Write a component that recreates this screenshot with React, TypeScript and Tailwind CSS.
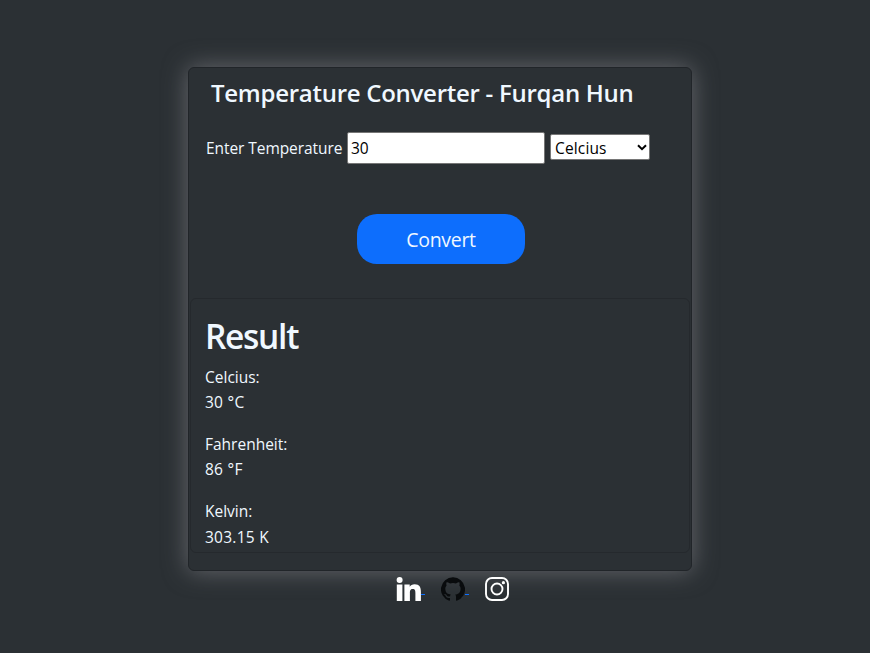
import React from "react";

const font = "font-['Open_Sans','Noto_Sans',sans-serif]";

function Reading({ label, value, spacing }: { label: string; value: string; spacing: string }) {
  return (
    <div className={`text-[15.5px] ${spacing}`}>
      <p className="tracking-[0px]">{label}</p>
      <p className="tracking-[0.25px]">{value}</p>
    </div>
  );
}

export default function App() {
  return (
    <main className={`flex h-[653px] w-[870px] flex-col overflow-hidden bg-[#2b3034] pt-[67px] pl-[188px] text-[aliceblue] ${font}`}>
      <section className="flex h-[504px] w-[504px] shrink-0 flex-col rounded-[6px] border border-[#212529] bg-[#2b3034] px-px shadow-[0_0_24px_rgba(128,128,134,0.7)]">
        <h1 className="h-[51px] pl-[21px] text-[24px] leading-[50px] font-semibold tracking-[-0.27px] whitespace-nowrap">
          Temperature Converter - Furqan Hun
        </h1>
        <div className="flex h-[58px] items-center pl-4">
          <label htmlFor="temperature" className="w-[141px] pt-px text-[15.5px] tracking-[-0.07px] whitespace-nowrap">Enter Temperature</label>
          <input id="temperature" defaultValue="30" className="h-[32px] w-[198px] rounded-[2px] border border-[#767676] bg-white px-[3px] text-[15.5px] text-black outline-none" />
          <div className="relative mb-[2px] ml-[5px] h-[26px] w-[100px]">
            <select defaultValue="Celcius" className="h-full w-full appearance-none rounded-[2px] border border-[#767676] bg-white pt-px pl-1 text-[15.5px] leading-[24px] text-black tracking-[0.15px] outline-none">
              <option>Celcius</option>
              <option>Fahrenheit</option>
              <option>Kelvin</option>
            </select>
            <svg className="pointer-events-none absolute top-[10px] right-[3px]" width="10" height="8" viewBox="0 0 10 8" fill="none" stroke="#000" strokeWidth="2">
              <path d="M1 1.2 5 5.2 9 1.2" />
            </svg>
          </div>
        </div>
        <div className="flex h-[121px] justify-center pt-[37px] pl-[2px]">
          <button className="h-[50.4px] w-[168px] rounded-[20px] bg-[#0d6efd] pt-[1.5px] text-[19.5px] tracking-[-0.3px] text-[aliceblue]">Convert</button>
        </div>
        <div className="h-[255px] rounded-[6px] border border-[#25292d] px-[14px] pt-[16px]">
          <h2 className="h-[50px] text-[33.5px] leading-[43px] font-semibold tracking-[-1.3px]">Result</h2>
          <Reading label="Celcius:" value="30 °C" spacing="mb-[17px] leading-[25px]" />
          <Reading label="Fahrenheit:" value="86 °F" spacing="mb-[16px] leading-[25px]" />
          <Reading label="Kelvin:" value="303.15 K" spacing="mb-0 leading-[26px]" />
        </div>
      </section>
      <nav className="flex pt-[6px] pl-[208px]">
        <a href="#linkedin" aria-label="LinkedIn" className="flex w-[45px] items-start">
          <svg width="25" height="24" viewBox="0 0 25 24" fill="#fff">
            <circle cx="3.6" cy="3.1" r="3" />
            <path d="M.8 7.6h5.6V24H.8zM8.4 7.6h5.3v2.1c.8-1.5 2.6-2.5 4.9-2.5 5 0 6.3 3 6.3 7.8v9h-5.5v-8c0-2.2-.2-4.1-2.6-4.1-2.6 0-2.9 1.9-2.9 4.1v8H8.4z" />
          </svg>
          <span className="mt-[17px] h-px w-[4px] bg-[#0d6efd]" />
        </a>
        <a href="#github" aria-label="GitHub" className="flex w-[44px] items-start">
          <svg width="24" height="24" viewBox="0 0 24 24" fill="#090b0d">
            <path d="M12 .3a12 12 0 0 0-3.8 23.4c.6.1.8-.3.8-.6v-2.2c-3.3.7-4-1.4-4-1.4-.6-1.4-1.4-1.8-1.4-1.8-1-.7.1-.7.1-.7 1.2 0 1.9 1.2 1.9 1.2 1 1.8 2.8 1.3 3.5 1 0-.8.4-1.3.7-1.6-2.7-.3-5.5-1.3-5.5-6 0-1.2.5-2.3 1.3-3.1-.2-.4-.6-1.6 0-3.2 0 0 1-.3 3.4 1.2a11.5 11.5 0 0 1 6 0c2.3-1.5 3.3-1.2 3.3-1.2.6 1.6.2 2.8 0 3.2.9.8 1.3 1.9 1.3 3.2 0 4.6-2.8 5.6-5.5 5.9.5.4.9 1 .9 2.2v3.3c0 .3.1.7.8.6A12 12 0 0 0 12 .3" />
          </svg>
          <span className="mt-[17px] h-px w-[4px] bg-[#0d6efd]" />
        </a>
        <a href="#instagram" aria-label="Instagram">
          <svg width="24" height="24" viewBox="0 0 24 24" fill="none" stroke="#fff" strokeWidth="1.9">
            <rect x="1" y="1" width="22" height="22" rx="6" />
            <circle cx="12" cy="12" r="5.5" />
            <circle cx="18.4" cy="5.7" r="1.6" fill="#fff" stroke="none" />
          </svg>
        </a>
      </nav>
    </main>
  );
}
